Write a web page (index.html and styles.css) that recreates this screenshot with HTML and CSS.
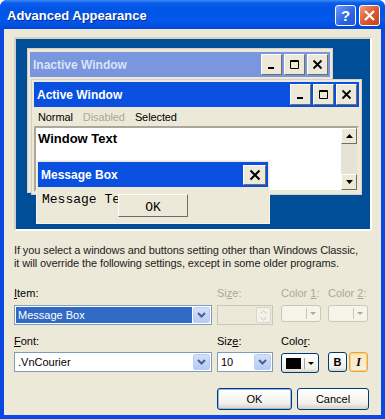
FILE: index.html
```html
<!DOCTYPE html>
<html lang="en">
  <head>
    <meta charset="UTF-8" />
    <title>Advanced Appearance</title>
    <link rel="stylesheet" href="styles.css">
  </head>
  <body>
    <div class="dialog">
      <div class="titlebar">
        <span class="title">Advanced Appearance</span>
        <div class="tb-btns">
          <span class="tb-btn tb-help">?</span>
          <span class="tb-btn tb-close">
            <svg width="13" height="13" viewBox="0 0 13 13"><path d="M2 2 L11 11 M11 2 L2 11" stroke="#fff" stroke-width="2.2"/></svg>
          </span>
        </div>
      </div>

      <div class="client">
        <!-- preview desktop -->
        <div class="preview">
          <div class="win inactive">
            <div class="caption">
              <span>Inactive Window</span>
              <div class="cap-btns">
                <span class="cap-btn"><svg width="11" height="11" viewBox="0 0 11 11"><rect x="2" y="8" width="6" height="2" fill="#000"/></svg></span>
                <span class="cap-btn"><svg width="11" height="11" viewBox="0 0 11 11"><path d="M1.5 1.5 H9.5 V9.5 H1.5 Z M1.5 2.5 H9.5" stroke="#000" fill="none"/></svg></span>
                <span class="cap-btn"><svg width="11" height="11" viewBox="0 0 11 11"><path d="M1.5 1.5 L9.5 9.5 M9.5 1.5 L1.5 9.5" stroke="#000" stroke-width="1.8"/></svg></span>
              </div>
            </div>
          </div>

          <div class="win active">
            <div class="caption">
              <span>Active Window</span>
              <div class="cap-btns">
                <span class="cap-btn"><svg width="11" height="11" viewBox="0 0 11 11"><rect x="2" y="8" width="6" height="2" fill="#000"/></svg></span>
                <span class="cap-btn"><svg width="11" height="11" viewBox="0 0 11 11"><path d="M1.5 1.5 H9.5 V9.5 H1.5 Z M1.5 2.5 H9.5" stroke="#000" fill="none"/></svg></span>
                <span class="cap-btn"><svg width="11" height="11" viewBox="0 0 11 11"><path d="M1.5 1.5 L9.5 9.5 M9.5 1.5 L1.5 9.5" stroke="#000" stroke-width="1.8"/></svg></span>
              </div>
            </div>
            <div class="menu">
              <span>Normal</span>
              <span class="dis">Disabled</span>
              <span>Selected</span>
            </div>
            <div class="wtext">
              <span class="wtext-label">Window Text</span>
              <div class="vscroll">
                <span class="sb-btn"><svg width="7" height="4" viewBox="0 0 7 4"><path d="M0 4 L3.5 0 L7 4 Z" fill="#000"/></svg></span>
                <span class="sb-track"></span>
                <span class="sb-btn"><svg width="7" height="4" viewBox="0 0 7 4"><path d="M0 0 L3.5 4 L7 0 Z" fill="#000"/></svg></span>
              </div>
            </div>
          </div>

          <div class="win msgbox">
            <div class="caption">
              <span>Message Box</span>
              <span class="cap-btn wide"><svg width="12" height="12" viewBox="0 0 12 12"><path d="M1.5 1.5 L10.5 10.5 M10.5 1.5 L1.5 10.5" stroke="#000" stroke-width="2"/></svg></span>
            </div>
            <div class="msgbody">
              <span class="msgtext">Message Text</span>
              <span class="msgok">OK</span>
            </div>
          </div>
        </div>

        <p class="note">If you select a windows and buttons setting other than Windows Classic,<br>it will override the following settings, except in some older programs.</p>

        <div class="form">
          <label class="lbl"><u>I</u>tem:</label>
          <label class="lbl off">Si<u>z</u>e:</label>
          <label class="lbl off">Color <u>1</u>:</label>
          <label class="lbl off">Color <u>2</u>:</label>

          <div class="combo ctl1 item">
            <span class="combo-val sel">Message Box</span>
            <span class="drop"><svg width="9" height="6" viewBox="0 0 9 6"><path d="M1 1 L4.5 4.5 L8 1" stroke="#4D6185" stroke-width="2" fill="none"/></svg></span>
          </div>
          <div class="combo ctl1 size off">
            <span class="combo-val"></span>
            <span class="spin">
              <svg width="7" height="4" viewBox="0 0 7 4"><path d="M0.5 3.5 L3.5 0.8 L6.5 3.5" stroke="#C9C7BA" fill="none"/></svg>
              <svg width="7" height="4" viewBox="0 0 7 4"><path d="M0.5 0.5 L3.5 3.2 L6.5 0.5" stroke="#C9C7BA" fill="none"/></svg>
            </span>
          </div>
          <div class="cbtn ctl1 off"><span class="swatch none"></span><span class="sep"></span><span class="tri"></span></div>
          <div class="cbtn ctl1 off"><span class="swatch none"></span><span class="sep"></span><span class="tri"></span></div>

          <label class="lbl row3"><u>F</u>ont:</label>
          <label class="lbl row3">Siz<u>e</u>:</label>
          <label class="lbl row3">Colo<u>r</u>:</label>
          <span class="row3"></span>

          <div class="combo ctl2 font">
            <span class="combo-val">.VnCourier</span>
            <span class="drop"><svg width="9" height="6" viewBox="0 0 9 6"><path d="M1 1 L4.5 4.5 L8 1" stroke="#4D6185" stroke-width="2" fill="none"/></svg></span>
          </div>
          <div class="combo ctl2 size">
            <span class="combo-val">10</span>
            <span class="drop"><svg width="9" height="6" viewBox="0 0 9 6"><path d="M1 1 L4.5 4.5 L8 1" stroke="#4D6185" stroke-width="2" fill="none"/></svg></span>
          </div>
          <div class="cbtn ctl2"><span class="swatch"></span><span class="sep"></span><span class="tri"></span></div>
          <div class="styles ctl2">
            <span class="sbtn bold">B</span>
            <span class="sbtn ital on">I</span>
          </div>
        </div>

        <div class="actions">
          <button class="btn ok">OK</button>
          <button class="btn cancel">Cancel</button>
        </div>
      </div>
    </div>
  </body>
</html>
```

FILE: styles.css
```css
* {
  padding: 0;
  margin: 0;
  box-sizing: border-box;
}

body {
  width: 385px;
  height: 419px;
  overflow: hidden;
  background: #fff;
  font-family: "Liberation Sans", Arial, sans-serif;
  font-size: 11px;
  color: #000;
}

.dialog {
  width: 385px;
  height: 419px;
  display: flex;
  flex-direction: column;
  background: #0A48DF;
  border-radius: 7px 7px 0 0;
}

/* title bar */
.titlebar {
  height: 29px;
  flex: none;
  display: flex;
  align-items: center;
  justify-content: space-between;
  padding: 1px 5px 0 7px;
  border-radius: 7px 7px 0 0;
  background: linear-gradient(#3C8CF5 0, #0A5CEB 3px, #0055E5 10px, #0259EC 20px, #0048D8 29px);
}

.title {
  color: #fff;
  font-weight: bold;
  font-size: 13px;
  text-shadow: 1px 1px #0B2A8C;
}

.tb-btns {
  display: flex;
  gap: 3px;
}

.tb-btn {
  width: 21px;
  height: 21px;
  border: 1px solid #fff;
  border-radius: 3px;
  display: flex;
  align-items: center;
  justify-content: center;
}

.tb-help {
  color: #fff;
  font-weight: bold;
  font-size: 15px;
  background: linear-gradient(135deg, #6E9CF7, #2A63E2 60%, #1D55D6);
}

.tb-close {
  background: linear-gradient(135deg, #EE9A78, #DB5A33 50%, #C9421C);
}

/* client area */
.client {
  flex: 1;
  margin: 0 4px 4px;
  background: #ECE9D8;
  padding: 8px 10px 0;
}

.preview {
  position: relative;
  width: 358px;
  height: 194px;
  background: #004E98;
  border: 2px solid;
  border-color: #D4D0C8 #fff #fff #D4D0C8;
  overflow: hidden;
}

.win {
  position: absolute;
  display: flex;
  flex-direction: column;
  background: #ECE9D8;
  border: 1px solid #D4D0C8;
  padding: 2px;
}

.inactive {
  left: 11px;
  top: 9px;
  width: 306px;
  height: 145px;
  padding: 3px 2px;
}

.active {
  left: 15px;
  top: 40px;
  width: 331px;
  height: 116px;
}

.msgbox {
  left: 20px;
  top: 121px;
  width: 234px;
  height: 64px;
  border: 1px solid #F4F3EE;
  padding: 1px;
}

.caption {
  height: 25px;
  flex: none;
  display: flex;
  align-items: center;
  justify-content: space-between;
  padding: 0 2px 0 3px;
  background: #0A50E0;
  color: #fff;
  font-weight: bold;
  font-size: 12px;
}

.inactive .caption {
  background: #7A96DF;
  color: #D8E4F8;
}

.cap-btns {
  display: flex;
  gap: 2px;
}

.cap-btn {
  width: 21px;
  height: 21px;
  display: flex;
  align-items: center;
  justify-content: center;
  background: #ECE9D8;
  border: 1px solid;
  border-color: #fff #716F64 #716F64 #fff;
}

.cap-btn.wide {
  width: 23px;
  height: 20px;
}

.menu {
  height: 19px;
  flex: none;
  display: flex;
  align-items: center;
  gap: 10px;
  padding-left: 4px;
  letter-spacing: -0.1px;
}

.dis {
  color: #ACA899;
}

.wtext {
  flex: 1;
  display: flex;
  justify-content: space-between;
  background: #fff;
  border: 2px solid;
  border-color: #ACA899 #ECE9D8 #ECE9D8 #ACA899;
}

.wtext-label {
  font-weight: bold;
  font-size: 13px;
  padding: 3px 0 0 2px;
}

.vscroll {
  width: 16px;
  display: flex;
  flex-direction: column;
  background: #E6E3D6;
}

.sb-btn {
  height: 16px;
  flex: none;
  display: flex;
  align-items: center;
  justify-content: center;
  background: #ECE9D8;
  border: 1px solid;
  border-color: #fff #716F64 #716F64 #fff;
}

.sb-track {
  flex: 1;
}

.msgbody {
  position: relative;
  flex: 1;
  padding: 5px 0 0 4px;
  font-family: "Liberation Mono", "Courier New", monospace;
  font-size: 13px;
}

.msgtext {
  white-space: nowrap;
  line-height: 15px;
}

/* the OK button lies over the end of the message text */
.msgok {
  position: absolute;
  left: 80px;
  top: 7px;
  width: 70px;
  height: 23px;
  display: flex;
  align-items: center;
  justify-content: center;
  padding-top: 3px;
  background: #ECE9D8;
  border: 1px solid;
  border-color: #fff #716F64 #716F64 #fff;
}

/* text below the preview */
.note {
  margin-top: 13px;
  line-height: 13px;
  letter-spacing: -0.1px;
  color: #222;
}

/* item / font settings */
.form {
  margin-top: 17px;
  display: grid;
  grid-template-columns: 203px 64px 47px 40px;
  align-items: start;
}

.lbl {
  line-height: 13px;
}

.lbl.off {
  color: #ACA899;
}

.ctl1 {
  margin-top: 5px;
}

.row3 {
  margin-top: 10px;
}

.ctl2 {
  margin-top: 4px;
}

.combo {
  height: 20px;
  display: flex;
  align-items: stretch;
  padding: 1px;
  background: #fff;
  border: 1px solid #7F9DB9;
}

.combo.item,
.combo.font {
  width: 198px;
}

.combo.size {
  width: 56px;
}

.combo.off {
  background: #ECE9D8;
  border-color: #C9C7BA;
}

.combo-val {
  flex: 1;
  display: flex;
  align-items: center;
  padding-left: 2px;
}

.combo-val.sel {
  background: #316AC5;
  color: #fff;
  margin-right: 1px;
}

.drop {
  width: 17px;
  display: flex;
  align-items: center;
  justify-content: center;
  border: 1px solid #BBCDF6;
  border-radius: 2px;
  background: linear-gradient(#D3E0FD, #B6CBF7);
}

.spin {
  width: 15px;
  display: flex;
  flex-direction: column;
  align-items: center;
  justify-content: space-around;
  border: 1px solid #D8D6CC;
  border-radius: 2px;
  background: #F2F1EA;
}

.cbtn {
  width: 40px;
  height: 17px;
  display: flex;
  align-items: center;
  padding: 0 4px;
  border: 1px solid #003C74;
  border-radius: 3px;
  background: linear-gradient(#fff, #F0EFE7 80%, #D8D4C6);
}

.cbtn.off {
  border-color: #C9C7BA;
  background: #F5F4EA;
}

.ctl2.cbtn {
  height: 20px;
  width: 38px;
  margin-top: 5px;
}

.swatch {
  width: 21px;
  height: 11px;
  background: #000;
}

.swatch.none {
  background: transparent;
}

.sep {
  width: 1px;
  height: 11px;
  margin: 0 3px;
  background: #ACA899;
}

.tri {
  width: 0;
  height: 0;
  border-left: 3px solid transparent;
  border-right: 3px solid transparent;
  border-top: 3px solid #000;
}

.off .tri {
  border-top-color: #ACA899;
}

.off .sep {
  background: #C9C7BA;
}

.styles {
  display: flex;
  gap: 2px;
}

.sbtn {
  width: 19px;
  height: 20px;
  display: flex;
  align-items: center;
  justify-content: center;
  font-weight: bold;
  font-size: 11px;
  border: 1px solid #003C74;
  border-radius: 3px;
  background: linear-gradient(#fff, #F0EFE7 80%, #D8D4C6);
}

.sbtn.ital {
  font-style: italic;
  font-family: "Liberation Serif", serif;
  font-size: 12px;
}

.sbtn.on {
  border-color: #E9A640;
  background: linear-gradient(#FCE7B8, #F5F1E6);
  box-shadow: inset 0 0 0 1px #F9CF82;
}

/* OK / Cancel */
.actions {
  margin-top: 15px;
  display: flex;
  justify-content: flex-end;
  gap: 5px;
  padding-right: 2px;
}

.btn {
  height: 22px;
  font-family: "Liberation Sans", Arial, sans-serif;
  font-size: 11px;
  color: #000;
  border: 1px solid #003C74;
  border-radius: 3px;
  background: linear-gradient(#fff, #F3F2EC 70%, #D6D0C5);
}

.btn.ok {
  width: 75px;
  box-shadow: inset 0 0 0 1px #98B8EA;
}

.btn.cancel {
  width: 72px;
}
```
